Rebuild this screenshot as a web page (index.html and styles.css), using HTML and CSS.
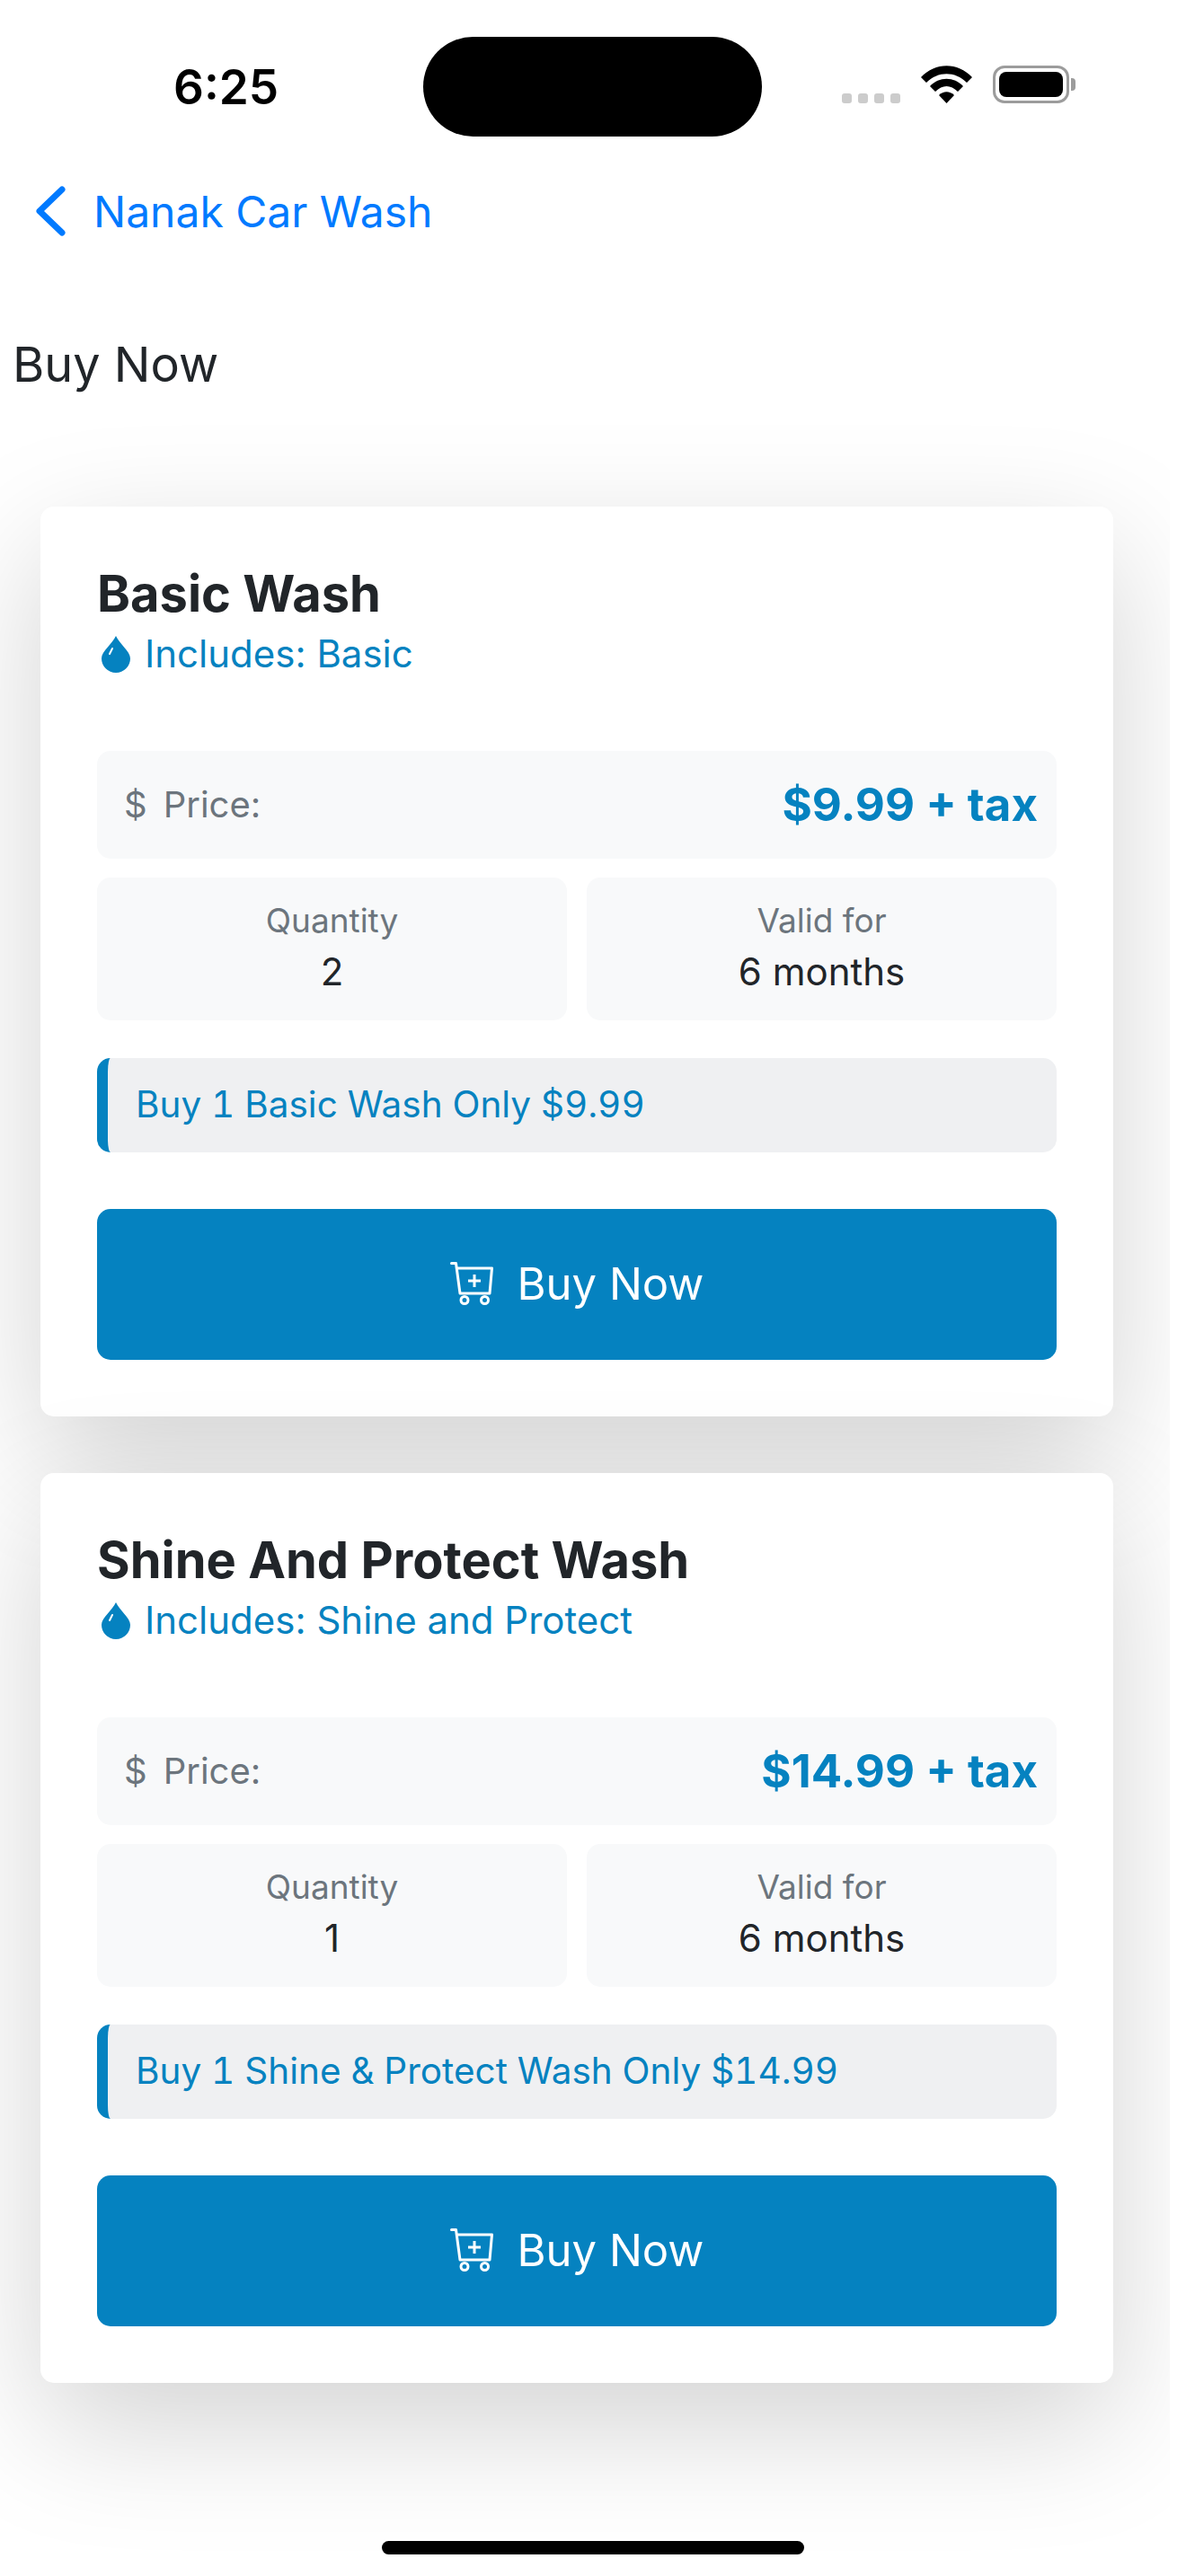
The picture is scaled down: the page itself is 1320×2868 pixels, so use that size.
FILE: index.html
```html
<!DOCTYPE html>
<html lang="en">
<head>
  <meta charset="UTF-8">
  <title>Buy Now</title>
  <link rel="stylesheet" href="styles.css">
</head>
<body>
<div class="status-bar">
  <div class="status-time">6:25</div>
  <div class="status-island"></div>
  <div class="status-icons">
    <div class="status-dots"><span></span><span></span><span></span><span></span></div>
    <svg class="status-wifi" width="57" height="42" viewBox="0 0 57 42">
      <path d="M0 13 C16 -4 41 -4 57 13 L51 19 C38 6 19 6 6 19Z" fill="#000"/>
      <path d="M10 23 C20 12 37 12 47 23 L41 29 C33 21 24 21 16 29Z" fill="#000"/>
      <path d="M20 33 C25 28 32 28 37 33 L28.500 42Z" fill="#000"/>
    </svg>
    <div class="status-battery"><div class="status-battery-fill"></div></div>
    <div class="status-battery-nub"></div>
  </div>
</div>

<div class="nav">
  <svg class="nav-back" width="34" height="56" viewBox="0 0 34 56">
    <path d="M30 4 L5 28 L30 52" fill="none" stroke="#007aff" stroke-width="7" stroke-linecap="round" stroke-linejoin="round"/>
  </svg>
  <span class="nav-title">Nanak Car Wash</span>
</div>

<div class="page-title">Buy Now</div>

<div class="cards">
  <div class="card">
    <div class="card-name">Basic Wash</div>
    <div class="card-includes">
      <svg width="32" height="41" viewBox="0 0 32 41">
        <path d="M16 0 C12 9 0 17 0 25 A16 16 0 0 0 32 25 C32 17 20 9 16 0Z" fill="#0582c0"/>
        <path d="M9 20 L12 14" stroke="#fff" stroke-width="2" stroke-linecap="round"/>
      </svg>
      <span class="card-includes-text">Includes: Basic</span>
    </div>
    <div class="price-row">
      <div class="price-label"><span class="price-sign">$</span><span>Price:</span></div>
      <div class="price-value">$9.99 + tax</div>
    </div>
    <div class="info-grid">
      <div class="info-cell">
        <div class="info-label">Quantity</div>
        <div class="info-value">2</div>
      </div>
      <div class="info-cell">
        <div class="info-label">Valid for</div>
        <div class="info-value">6 months</div>
      </div>
    </div>
    <div class="offer">Buy 1 Basic Wash Only $9.99</div>
    <button class="buy-button">
      <svg width="48" height="48" viewBox="0 0 48 48">
        <path d="M1.500 1.500 H6.500 L11 35 H44 L46.500 7 H8" fill="none" stroke="#fff" stroke-width="3" stroke-linejoin="round" stroke-linecap="round"/>
        <path d="M27 14 V28 M20 21 H34" fill="none" stroke="#fff" stroke-width="3"/>
        <circle cx="16" cy="42.500" r="4" fill="none" stroke="#fff" stroke-width="3"/>
        <circle cx="38.500" cy="42.500" r="4" fill="none" stroke="#fff" stroke-width="3"/>
      </svg>
      <span>Buy Now</span>
    </button>
  </div>

  <div class="card">
    <div class="card-name">Shine And Protect Wash</div>
    <div class="card-includes">
      <svg width="32" height="41" viewBox="0 0 32 41">
        <path d="M16 0 C12 9 0 17 0 25 A16 16 0 0 0 32 25 C32 17 20 9 16 0Z" fill="#0582c0"/>
        <path d="M9 20 L12 14" stroke="#fff" stroke-width="2" stroke-linecap="round"/>
      </svg>
      <span class="card-includes-text">Includes: Shine and Protect</span>
    </div>
    <div class="price-row">
      <div class="price-label"><span class="price-sign">$</span><span>Price:</span></div>
      <div class="price-value">$14.99 + tax</div>
    </div>
    <div class="info-grid">
      <div class="info-cell">
        <div class="info-label">Quantity</div>
        <div class="info-value">1</div>
      </div>
      <div class="info-cell">
        <div class="info-label">Valid for</div>
        <div class="info-value">6 months</div>
      </div>
    </div>
    <div class="offer">Buy 1 Shine &amp; Protect Wash Only $14.99</div>
    <button class="buy-button">
      <svg width="48" height="48" viewBox="0 0 48 48">
        <path d="M1.500 1.500 H6.500 L11 35 H44 L46.500 7 H8" fill="none" stroke="#fff" stroke-width="3" stroke-linejoin="round" stroke-linecap="round"/>
        <path d="M27 14 V28 M20 21 H34" fill="none" stroke="#fff" stroke-width="3"/>
        <circle cx="16" cy="42.500" r="4" fill="none" stroke="#fff" stroke-width="3"/>
        <circle cx="38.500" cy="42.500" r="4" fill="none" stroke="#fff" stroke-width="3"/>
      </svg>
      <span>Buy Now</span>
    </button>
  </div>
</div>

<div class="home-bar"></div>
</body>
</html>
```

FILE: styles.css
```css
html, body {
  margin: 0;
  padding: 0;
  background-color: #fff;
}

body {
  width: 1320px;
  height: 2868px;
  overflow: hidden;
  font-family: Inter, "Liberation Sans", sans-serif;
  color: #212529;
  display: flex;
  flex-direction: column;
}

.status-bar {
  height: 190px;
  box-sizing: border-box;
  padding: 41px 0 0 0;
  display: flex;
  align-items: flex-start;
}

.status-time {
  width: 471px;
  box-sizing: border-box;
  padding: 23px 0 0 193px;
  font-size: 53px;
  line-height: 66px;
  font-weight: 600;
  color: #000;
}

.status-island {
  width: 377px;
  height: 111px;
  background-color: #000;
  border-radius: 56px;
}

.status-icons {
  display: flex;
  align-items: flex-end;
  height: 74px;
  margin-left: 89px;
}

.status-dots {
  display: flex;
  gap: 7px;
  margin-right: 23px;
}

.status-dots span {
  width: 11px;
  height: 11px;
  border-radius: 3px;
  background-color: #cccccc;
}

.status-wifi {
  display: block;
  margin-right: 23px;
}

.status-battery {
  width: 85px;
  height: 42px;
  box-sizing: border-box;
  border: 3px solid #9c9c9c;
  border-radius: 13px;
  padding: 4px;
}

.status-battery-fill {
  height: 100%;
  background-color: #000;
  border-radius: 8px;
}

.status-battery-nub {
  width: 5px;
  height: 14px;
  margin: 0 0 14px 2px;
  background-color: #9c9c9c;
  border-radius: 0 4px 4px 0;
}

.nav {
  height: 90px;
  display: flex;
  align-items: center;
  padding-left: 39px;
}

.nav-back {
  margin-right: 31px;
}

.nav-title {
  font-size: 48px;
  color: #007aff;
}

.page-title {
  margin-top: 86px;
  padding-left: 14px;
  font-size: 54px;
  line-height: 80px;
  height: 198px;
}

.cards {
  width: 1302px;
  flex: 1;
  min-height: 0;
  overflow: hidden;
  box-sizing: border-box;
  padding: 140px 63px 0 45px;
  margin-top: -140px;
  display: flex;
  flex-direction: column;
  gap: 63px;
}

.card {
  background-color: #fff;
  border-radius: 15px;
  padding: 63px;
  box-shadow: 0 48px 144px rgba(0, 0, 0, 0.175);
  flex-shrink: 0;
}

.card-name {
  font-size: 56px;
  line-height: 71px;
  font-weight: 700;
  margin-top: -1px;
}

.card-includes {
  display: flex;
  align-items: center;
  gap: 16px;
  height: 62px;
  padding-left: 5px;
  margin-bottom: 77px;
  font-size: 42px;
  color: #0582c0;
}

.card-includes-text {
  margin-bottom: 2px;
}

.price-row {
  height: 120px;
  box-sizing: border-box;
  padding: 0 21px 2px 30px;
  background-color: #f8f9fa;
  border-radius: 15px;
  display: flex;
  align-items: center;
  justify-content: space-between;
}

.price-label {
  display: flex;
  gap: 18px;
  font-size: 40px;
  color: #6c757d;
}

.price-value {
  font-size: 51px;
  font-weight: 700;
  color: #0582c0;
}

.info-grid {
  display: grid;
  grid-template-columns: 1fr 1fr;
  gap: 22px;
  margin-top: 21px;
  margin-bottom: 42px;
}

.info-cell {
  height: 159px;
  box-sizing: border-box;
  padding-top: 21px;
  background-color: #f8f9fa;
  border-radius: 15px;
  text-align: center;
}

.info-label {
  font-size: 37px;
  line-height: 54px;
  color: #6c757d;
}

.info-value {
  font-size: 42px;
  line-height: 60px;
}

.offer {
  height: 105px;
  box-sizing: border-box;
  padding: 0 0 2px 31px;
  background-color: #eff0f2;
  border-left: 12px solid #0582c0;
  border-radius: 15px;
  display: flex;
  align-items: center;
  font-size: 40.500px;
  font-variant-numeric: tabular-nums;
  color: #0582c0;
  margin-bottom: 63px;
}

.buy-button {
  width: 100%;
  height: 168px;
  padding: 0 0 2px 0;
  display: flex;
  align-items: center;
  justify-content: center;
  gap: 27px;
  background-color: #0582c0;
  color: #fff;
  border: none;
  border-radius: 15px;
  font-family: inherit;
  font-size: 49px;
}

.home-bar {
  position: absolute;
  top: 2829px;
  left: 425px;
  width: 470px;
  height: 15px;
  background-color: #000;
  border-radius: 8px;
}
```
